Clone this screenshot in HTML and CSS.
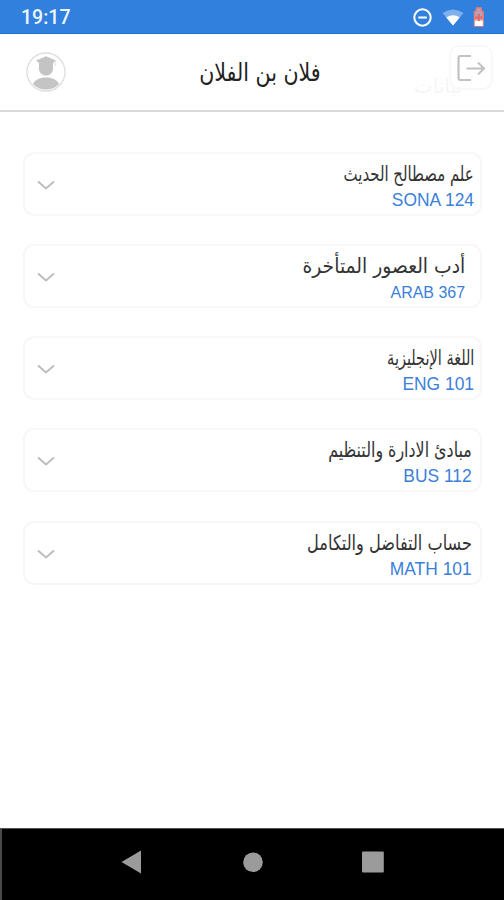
FILE: index.html
```html
<!DOCTYPE html>
<html lang="ar">
<head>
<meta charset="utf-8">
<title>المواد</title>
<link rel="stylesheet" href="styles.css">
</head>
<body>
<div class="screen">
  <div class="status">
    <span class="clock">19:17</span>
    <svg class="status-icons" width="76" height="24" viewBox="0 0 76 24">
      <circle cx="9.500" cy="12.500" r="8.200" fill="none" stroke="#fff" stroke-width="2"/>
      <path d="M5.300 12.500h8.500" stroke="#fff" stroke-width="2"/>
      <path d="M29.500 8Q40 1 50.500 8L40 20.500z" fill="#7fb0ea"/>
      <path d="M33.300 12.500Q40 8 46.700 12.500L40 20.500z" fill="#fff"/>
      <path d="M61.500 7l2-1.500V3h4.600v2.500l2 1.500V21h-8.600z" fill="#b9a0b5" stroke="#ec7f78" stroke-width="1.500"/>
      <path d="M61.800 15.500h8V21h-8z" fill="#fff"/>
      <path d="M65.800 9v7M62.300 12.500h7" stroke="#ee655b" stroke-width="2"/>
    </svg>
  </div>
  <header class="header">
    <svg class="avatar" width="40" height="40" viewBox="0 0 40 40">
      <circle cx="20" cy="20" r="19" fill="#fff" stroke="#dedede" stroke-width="1.300"/>
      <path d="M10 8.500L20 4.200l10 4.300-3 2.500v7c-1 3-3 5.500-7 5.500s-6-2.500-7-5.500v-7z" fill="#c4c4c4"/>
      <path d="M29 9v5" stroke="#dedede" stroke-width="1"/>
      <path d="M6.800 32c2.500-4.500 7.500-6.500 13.200-6.500s10.700 2 13.200 6.500C30 35.500 25.500 37.500 20 37.500S10 35.500 6.800 32z" fill="#c4c4c4"/>
    </svg>
    <span class="title" dir="rtl">فلان بن الفلان</span>
    <span class="ghost" dir="rtl">بيانات</span>
    <div class="logout">
      <svg width="28" height="26" viewBox="0 0 28 26"><path d="M14 1H3.500Q1.500 1 1.500 3v20q0 2 2 2H14" fill="none" stroke="#c2c2c2" stroke-width="2.200"/><path d="M9.500 13.500H27M21 7.500l6 6-6 6" fill="none" stroke="#c2c2c2" stroke-width="2"/></svg>
    </div>
  </header>
  <main class="courses">
    <section class="card">
      <svg class="chevron" width="18" height="10" viewBox="0 0 18 10"><path d="M1 1.500l8 7 8-7"/></svg>
      <div class="info"><div class="name n1" dir="rtl">علم مصطالح الحديث</div><div class="code">SONA 124</div></div>
    </section>
    <section class="card">
      <svg class="chevron" width="18" height="10" viewBox="0 0 18 10"><path d="M1 1.500l8 7 8-7"/></svg>
      <div class="info inset"><div class="name n2" dir="rtl">أدب العصور المتأخرة</div><div class="code small">ARAB 367</div></div>
    </section>
    <section class="card">
      <svg class="chevron" width="18" height="10" viewBox="0 0 18 10"><path d="M1 1.500l8 7 8-7"/></svg>
      <div class="info"><div class="name n3" dir="rtl">اللغة الإنجليزية</div><div class="code">ENG 101</div></div>
    </section>
    <section class="card">
      <svg class="chevron" width="18" height="10" viewBox="0 0 18 10"><path d="M1 1.500l8 7 8-7"/></svg>
      <div class="info near"><div class="name n4" dir="rtl">مبادئ الادارة والتنظيم</div><div class="code">BUS 112</div></div>
    </section>
    <section class="card">
      <svg class="chevron" width="18" height="10" viewBox="0 0 18 10"><path d="M1 1.500l8 7 8-7"/></svg>
      <div class="info near"><div class="name n5" dir="rtl">حساب التفاضل والتكامل</div><div class="code">MATH 101</div></div>
    </section>
  </main>
  <nav class="navbar">
    <svg width="504" height="71" viewBox="0 0 504 71" fill="#9b9b9b">
      <path d="M121.500 33L141 21.500v23z"/>
      <circle cx="253" cy="33.300" r="9.800"/>
      <rect x="362" y="22.500" width="21.800" height="21" rx="1"/>
    </svg>
  </nav>
</div>
</body>
</html>
```

FILE: styles.css
```css
* { box-sizing: border-box; }
body { margin: 0; background: #fff; font-family: "Liberation Sans", sans-serif; }
.screen { display: flex; flex-direction: column; width: 504px; height: 900px; overflow: hidden; }
.status {
  display: flex; align-items: center; justify-content: space-between;
  height: 34px; padding: 0 15px 0 21px; background: #3280de; border-bottom: 1px solid #1c6fd1;
}
.clock { color: #eef5ff; font: 500 19.5px/34px Roboto, sans-serif; padding-top: 2px; }
.status-icons { align-self: flex-start; margin-top: 5px; }
.header {
  position: relative; display: flex; align-items: center; justify-content: center;
  height: 78px; border-bottom: 2px solid #dadada;
}
.avatar { position: absolute; left: 26px; top: 18px; }
.title {
  font: 23px/32px "DejaVu Sans", sans-serif; color: #222; white-space: nowrap;
  margin-left: 15px; transform: scale(0.895, 1.08);
}
.ghost { position: absolute; right: 42px; top: 38px; font: 20px/28px "DejaVu Sans", sans-serif; color: #f6f6f6; }
.logout {
  position: absolute; right: 11px; top: 11px; width: 44px; height: 45px;
  display: flex; align-items: center; justify-content: center;
  border: 2px solid #f8f8f8; border-radius: 10px;
}
.courses { flex: 1; display: flex; flex-direction: column; gap: 28.3px; padding: 39.6px 22px 0 23px; }
.card {
  display: flex; align-items: flex-start; justify-content: space-between;
  height: 64px; padding: 0 6px 0 11.5px; border: 2px solid #f7f7f7; border-radius: 11px;
}
.chevron { margin-top: 26px; fill: none; stroke: #bdbdbd; stroke-width: 2; }
.info { display: flex; flex-direction: column; align-items: flex-end; padding-top: 3px; }
.near { padding-right: 2px; }
.inset { padding-right: 9px; }
.name {
  height: 32px; font: 19px/32px "DejaVu Sans", sans-serif; color: #333;
  white-space: nowrap; transform-origin: right center;
}
.n1 { transform: scale(0.785, 1.08); }
.n2 { transform: scale(0.985, 1.08); }
.n3 { transform: scale(0.763, 1.08); }
.n4 { transform: scale(0.836, 1.08); }
.n5 { transform: scale(0.85, 1.08); }
.code {
  font-size: 18px; line-height: 22px; color: #3b80d9; white-space: nowrap;
  transform: scaleX(0.967); transform-origin: right center;
}
.small { font-size: 16.5px; }
.navbar { height: 72px; background: #000; border-top: 1px solid #555; border-left: 2px solid #484848; }
.navbar svg { display: block; margin-left: -2px; }
```
